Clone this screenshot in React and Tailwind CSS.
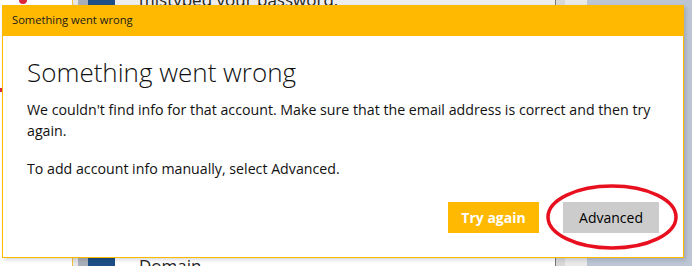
export default function App() {
  return (
    <div className="relative w-[692px] h-[266px] overflow-hidden bg-white" style={{ fontFamily: '"Open Sans", "Noto Sans", sans-serif' }}>
      {/* window behind the dialog */}
      <div className="flex h-full">
        <div className="w-[72px] bg-white relative">
          <div className="absolute left-[19px] top-[-4px] w-[8px] h-[8px] rounded-full bg-[#d9283a]" />
          <div className="absolute left-0 top-[88px] w-[3px] h-[4px] bg-[#d9283a]" />
        </div>
        <div className="w-[1px] bg-[#f0c040]" />
        <div className="w-[5px] bg-[#e6e6e6]" />
        <div className="w-[10px] bg-[#a9afb8]" />
        <div className="w-[27px] bg-[#1d4f86]" />
        <div className="flex-1 flex">
          <div className="w-[440px] flex flex-col justify-between bg-[#ededed]">
            <div className="pl-[24px] mt-[-13px] text-[17px] text-[#222]">mistyped your password.</div>
            <div className="pl-[24px] mb-[-12px] text-[17px] text-[#222] bg-white">Domain</div>
          </div>
          <div className="w-[10px] bg-[#d8d8d8] border-l border-[#777]" />
          <div className="w-[22px] bg-[#e9e9e9]" />
          <div className="flex-1 bg-[#bcc5d4]" />
        </div>
      </div>

      {/* dialog */}
      <div className="absolute left-[2px] top-[5px] w-[682px] h-[253px] bg-white border-x border-b border-[#ffb900] flex flex-col shadow-[2px_2px_4px_rgba(0,0,0,0.15)]">
        <div className="h-[31px] bg-[#ffb900] flex items-center pl-[9px] text-[11.2px] text-[#1a1a1a]">
          Something went wrong
        </div>
        <div className="flex-1 flex flex-col pl-[24px] pr-[12px]">
          <h1 className="mt-[19px] text-[26px] font-light leading-[34px] text-[#111]">Something went wrong</h1>
          <p className="mt-[10px] text-[14.2px] leading-[21px] text-[#111]">
            We couldn't find info for that account. Make sure that the email address is correct and then try again.
          </p>
          <p className="mt-[17px] text-[14.2px] leading-[21px] text-[#111]">To add account info manually, select Advanced.</p>
          <div className="mt-auto mb-[24px] pr-[12px] flex justify-end gap-[24px]">
            <button className="w-[91px] h-[31px] bg-[#ffb900] text-white font-bold text-[14px]">Try again</button>
            <button className="w-[96px] h-[31px] bg-[#cccccc] text-black text-[14px]">Advanced</button>
          </div>
        </div>
      </div>

      {/* red annotation ellipse */}
      <svg className="absolute left-[544px] top-[181px]" width="138" height="72" viewBox="0 0 138 72">
        <ellipse cx="68" cy="36" rx="64" ry="31" fill="none" stroke="#e8101e" strokeWidth="3.5" />
      </svg>
    </div>
  );
}
